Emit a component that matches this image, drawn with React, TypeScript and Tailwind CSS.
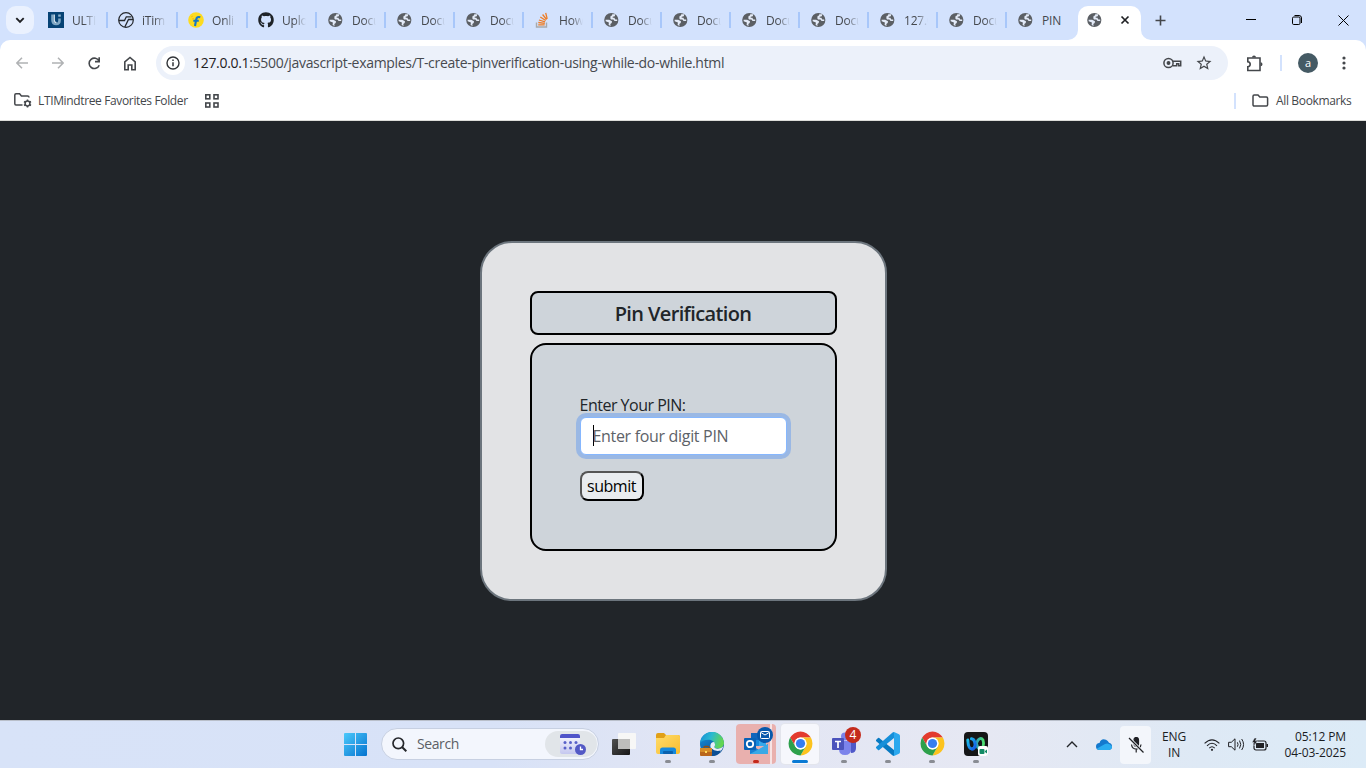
import React from "react";
import { MdStarBorder } from "react-icons/md";
import { FaGithub } from "react-icons/fa";

type IconProps = { className?: string };

const Globe = () => (
  <svg className="size-4 shrink-0" viewBox="0 0 16 16">
    <circle cx="7.300" cy="8" r="7.100" fill="#5b5f64" />
    <path
      d="M8.200 2.200H11.200L10.800 4.300 8.700 4.700V5.700H10.300L11.300 7.400H13.200V8.900H10.600L9.400 7.500H7L6.300 6.200 6.600 4 8 3.400Z"
      fill="#e4ebf8"
    />
    <path d="M1.600 7.700H5.200L8 9.300 7.700 11 6.300 12 6.600 13.900 4.600 13 4.900 10.600 1.700 9.300Z" fill="#e4ebf8" />
  </svg>
);

const UltiIcon = () => (
  <svg className="size-4 shrink-0" viewBox="0 0 16 16">
    <rect width="16" height="16" fill="#064375" />
    <path d="M4.500 2.500v5.500q0 4 3.800 4 3.200 0 3.200-3.200V6.500" fill="none" stroke="#7fa7c4" strokeWidth="2.600" />
    <path d="M6.300 2.500v5.500q0 2.500 2.200 2.500" fill="none" stroke="#d6e4ee" strokeWidth="1.200" />
    <rect x="10.200" y="2.500" width="2.600" height="2.200" fill="#8fb4cf" />
  </svg>
);

const ITimeIcon = () => (
  <svg className="size-4 shrink-0" viewBox="0 0 16 16" fill="none" stroke="#25282d" strokeWidth="1.200">
    <circle cx="8" cy="8" r="7.300" />
    <path d="M.8 8.500H6.500L8.300 4.800H13.500M15.200 7.500H10.500L6.800 15" strokeWidth="1.300" />
  </svg>
);

const FlipIcon = () => (
  <svg className="size-4 shrink-0" viewBox="0 0 16 16">
    <circle cx="8" cy="8" r="7.800" fill="#fddb1f" />
    <path d="M12.300 5.300Q8.900 4.200 8.200 7.500L7 14M5.300 8.700h5.500" fill="none" stroke="#1677c5" strokeWidth="2.100" />
    <path d="m3 5 2-1M4 7l2-.5" stroke="#f3bd16" />
  </svg>
);

const StackIcon = () => (
  <svg className="size-4 shrink-0" viewBox="0 0 16 16" fill="none">
    <path d="M1.500 10.500v4.500h10v-4.500" stroke="#a8a9ab" strokeWidth="1.400" />
    <path d="M3.200 12.800h6.500M3.300 10.500l6.500.8M3.900 8l6.200 1.900M5.300 5l5.400 3.500M7.600 2.500l4 5M10.700.8l1.500 6" stroke="#ee7c25" strokeWidth="1.300" />
  </svg>
);

const SECTOR = "M24 13H43.05A22 22 0 0 0 4.950 13L14.470 29.500A11 11 0 0 1 24 13Z";

const ChromeIcon = () => (
  <svg className="size-[25px]" viewBox="1 1 46 46">
    <path d={SECTOR} fill="#e33b2e" />
    <path d={SECTOR} fill="#fcc31e" transform="rotate(120 24 24)" />
    <path d={SECTOR} fill="#2da04b" transform="rotate(240 24 24)" />
    <circle cx="24" cy="24" r="11" fill="#fff" />
    <circle cx="24" cy="24" r="8.500" fill="#367df0" />
  </svg>
);

const tabs: { title: string; icon: React.ReactNode; wide?: boolean }[] = [
  { title: "ULTI", icon: <UltiIcon />, wide: true },
  { title: "iTim", icon: <ITimeIcon />, wide: true },
  { title: "Onli", icon: <FlipIcon />, wide: true },
  { title: "Uplo", icon: <FaGithub className="size-4 shrink-0 text-[#1f2328]" />, wide: true },
  { title: "Docu", icon: <Globe /> },
  { title: "Docu", icon: <Globe /> },
  { title: "Docu", icon: <Globe /> },
  { title: "How", icon: <StackIcon /> },
  { title: "Docu", icon: <Globe /> },
  { title: "Docu", icon: <Globe /> },
  { title: "Docu", icon: <Globe /> },
  { title: "Docu", icon: <Globe /> },
  { title: "127.0", icon: <Globe /> },
  { title: "Docu", icon: <Globe /> },
  { title: "PIN", icon: <Globe /> },
];

function TabStrip() {
  return (
    <div className="flex h-10 bg-[#d3e2fd]">
      <button className="ml-1.5 mr-1 mt-1.5 flex size-7 shrink-0 items-center justify-center rounded-[10px] bg-[#eaf1fe]">
        <svg className="size-3" viewBox="0 0 12 12" fill="none" stroke="#1f2023" strokeWidth="1.900">
          <path d="m2.300 4.200 3.700 3.700 3.700-3.700" />
        </svg>
      </button>
      {tabs.map((t, i) => (
        <div key={i} className={`flex h-10 shrink-0 items-center pl-2.5 ${t.wide ? "w-[70px]" : "w-[69px]"}`}>
          <div className="flex w-6 shrink-0 items-center">{t.icon}</div>
          <div
            className={`w-[30px] shrink-0 whitespace-nowrap pt-px text-xs leading-5 tracking-[-0.2px] text-[#45484d] ${
              t.title === "PIN" ? "" : "[mask-image:linear-gradient(to_right,black_12px,transparent_24px)]"
            }`}
          >
            {t.title}
          </div>
          {i < 14 && <div className={`ml-auto h-4 w-0.5 bg-[#a8c7fa] ${i < 3 ? "" : "mr-px"}`} />}
        </div>
      ))}
      <div className="relative ml-px mt-1.5 flex h-[34px] w-[63px] shrink-0 items-center rounded-t-[10px] bg-white pb-1.5 pl-[9px]">
        <svg className="absolute -left-2.5 bottom-0 size-2.5" viewBox="0 0 10 10"><path d="M10 0v10H0A10 10 0 0 0 10 0Z" fill="#fff" /></svg>
        <svg className="absolute -right-2.5 bottom-0 size-2.5" viewBox="0 0 10 10"><path d="M0 0v10h10A10 10 0 0 1 0 0Z" fill="#fff" /></svg>
        <Globe />
        <svg className="ml-[17px] size-2.5" viewBox="0 0 10 10" stroke="#1f2023" strokeWidth="1.700">
          <path d="m1.500 1.500 7 7m0-7-7 7" />
        </svg>
      </div>
      <svg className="ml-3.5 mt-[15px] size-[11px]" viewBox="0 0 11 11" stroke="#44474b" strokeWidth="1.600">
        <path d="M5.500.5v10M.5 5.500h10" />
      </svg>
      <div className="ml-auto mr-[17px] flex h-10 items-center gap-9 text-black">
        <svg className="size-2.5" viewBox="0 0 10 10" stroke="black"><path d="M0 4.500h10" /></svg>
        <svg className="size-2.5" viewBox="0 0 10 10" fill="none" stroke="black">
          <rect x=".5" y="2" width="7.500" height="7.500" rx="1.200" />
          <path d="M2.500.5H7A2.500 2.500 0 0 1 9.500 3v5" />
        </svg>
        <svg className="size-[11px]" viewBox="0 0 11 11" stroke="black"><path d="m.5.5 10 10m0-10-10 10" /></svg>
      </div>
    </div>
  );
}

const FolderIcon = ({ className }: IconProps) => (
  <svg className={className} viewBox="0 0 17 14" fill="none" stroke="#44474b" strokeWidth="1.500">
    <path d="M1 2.200Q1 1 2.200 1H6l1.800 2h6.600q1.200 0 1.200 1.200v6.600q0 1.200-1.200 1.200H2.200Q1 12 1 10.800Z" />
  </svg>
);

function Toolbar() {
  return (
    <div className="bg-[#d3e2fd]">
      <div className="flex h-[46px] items-center rounded-t-[10px] bg-white pl-4">
        <svg className="size-3" viewBox="0 0 12 12" fill="none" stroke="#b0b2b4" strokeWidth="1.500"><path d="M12 6H1m5-5.200L.9 6 6 11.200" /></svg>
        <svg className="ml-6 size-3" viewBox="0 0 12 12" fill="none" stroke="#b0b2b4" strokeWidth="1.500"><path d="M0 6h11M6 .8 11.100 6 6 11.200" /></svg>
        <svg className="ml-6 size-[13px]" viewBox="0 0 13 13" fill="none" stroke="#44474b" strokeWidth="1.600">
          <path d="M11.200 8.200A5.200 5.200 0 1 1 11.100 4.200M11.200.3v4.300H7" />
        </svg>
        <svg className="ml-[23px] h-[15px] w-3" viewBox="0 0 12 15" fill="none" stroke="#44474b" strokeWidth="1.600">
          <path d="M.8 13.700V5.800L6 1.500l5.200 4.300v7.900H7.800V9H4.200v4.700Z" />
        </svg>
        <div className="ml-5 flex h-[34px] w-[1072px] items-center rounded-full bg-[#ecf1fa] pl-[5px] pr-[15px]">
          <div className="flex size-6 items-center justify-center rounded-full bg-white">
            <svg className="size-3.5" viewBox="0 0 14 14" fill="none" stroke="#323539" strokeWidth="1.400">
              <circle cx="7" cy="7" r="6" /><path d="M7 6.200v4M7 3.500v1.500" strokeWidth="1.500" />
            </svg>
          </div>
          <div className="ml-2 whitespace-nowrap text-sm tracking-[-0.31px] text-[#474a4f]">
            <span className="text-[#1f2023]">127.0.0.1</span>:5500/javascript-examples/T-create-pinverification-using-while-do-while.html
          </div>
          <svg className="ml-auto h-3 w-[19px]" viewBox="0 0 19 12" fill="none" stroke="#44474b" strokeWidth="1.500">
            <circle cx="5.500" cy="6" r="4.600" /><circle cx="5.500" cy="6" r="1.200" fill="#44474b" />
            <path d="M9.700 4.200h8v4.600h-2v-2h-2v2h-4" />
          </svg>
          <MdStarBorder className="ml-[13px] size-[18px] text-[#44474b]" />
        </div>
        <svg className="ml-[18px] h-[17px] w-[18px]" viewBox="0 0 18 17" fill="none" stroke="#44474b" strokeWidth="1.600">
          <path d="M1.800 3H14v12.500H1.800v-3.700q2.400-.3 2.400-2.500T1.800 6.800Z" />
          <path d="M6 2.500a2 2 0 0 1 4 0ZM14.500 7.300a2 2 0 0 1 0 4Z" fill="#44474b" stroke="none" />
        </svg>
        <div className="ml-4 h-4 w-0.5 bg-[#d3e2fd]" />
        <div className="ml-4 flex size-5 items-center justify-center rounded-full bg-[#455a64] pb-px text-[11px] leading-none text-white">a</div>
        <svg className="ml-6 h-3.5 w-1" viewBox="0 0 4 14" fill="#44474b"><circle cx="2" cy="2" r="1.600" /><circle cx="2" cy="7" r="1.600" /><circle cx="2" cy="12" r="1.600" /></svg>
      </div>
      <div className="flex h-[35px] items-center border-b border-[#dcddd9] bg-white pb-[5px] pl-3.5 pr-3.5 text-xs text-[#44474b]">
        <svg className="h-[15px] w-[18px]" viewBox="0 0 18 15" fill="none" stroke="#44474b" strokeWidth="1.500">
          <path d="M8.500 12H2Q.8 12 .8 10.800V2Q.8.800 2 .8h3.600L7.400 3H13.500q1.500 0 1.500 1.500" />
          <circle cx="13.500" cy="10.500" r="2.400" /><path d="M13.500 6.500v1.600m0 4.800v1.600m-3.500-6 1.400.8m4.200 2.400 1.400.8m0-4-1.400.8m-4.200 2.400-1.400.8" />
        </svg>
        <span className="ml-1.5 w-[151px] whitespace-nowrap tracking-[-0.36px]">LTIMindtree Favorites Folder</span>
        <svg className="ml-4 size-3.5" viewBox="0 0 14 14" fill="none" stroke="#44474b" strokeWidth="1.600">
          <rect x=".8" y=".8" width="4" height="4" /><rect x="9" y=".8" width="4" height="4" /><rect x=".8" y="9" width="4" height="4" /><rect x="9" y="9" width="4" height="4" />
        </svg>
        <div className="ml-auto h-4 w-0.5 bg-[#d3e2fd]" />
        <FolderIcon className="ml-4 h-3.5 w-[17px]" />
        <span className="ml-[7px] w-[76px] whitespace-nowrap tracking-[-0.35px]">All Bookmarks</span>
      </div>
    </div>
  );
}

function PinPage() {
  return (
    <main className="flex h-[599px] items-center justify-center bg-[#212529]">
      <div className="flex h-[360px] w-[407px] flex-col gap-2 rounded-[32px] border-2 border-[#6c757d] bg-[#e2e3e5] p-12 text-[#212529]">
        <h1 className="flex h-11 shrink-0 items-center justify-center rounded-lg border-2 border-black bg-[#ced4da] pt-0.5 text-xl font-semibold tracking-[-0.63px]">Pin Verification</h1>
        <form className="flex h-[208px] flex-col items-start rounded-2xl border-2 border-black bg-[#ced4da] p-12 text-base" onSubmit={(e) => e.preventDefault()}>
          <label className="h-6 whitespace-nowrap tracking-[-0.5px]">Enter Your PIN:</label>
          <div className="flex h-[38px] w-[207px] shrink-0 items-center rounded-md border border-[#86b7fe] bg-white pl-3 text-[#5d6268] shadow-[0_0_0_4px_#9ab8e4]">
            <div className="-mr-px h-[21px] w-px bg-black" />
            <span className="whitespace-nowrap tracking-[-0.32px]">Enter four digit PIN</span>
          </div>
          <button className="mt-4 h-[30px] w-16 shrink-0 rounded-lg border-2 border-b-black border-l-[#555] border-r-black border-t-[#555] bg-[#e9ecef] leading-none tracking-[-0.45px] text-black">submit</button>
        </form>
      </div>
    </main>
  );
}

function AppCell({ children, running, className = "" }: { children: React.ReactNode; running?: "gray" | "red" | "blue"; className?: string }) {
  return (
    <div className="flex h-[47px] w-11 flex-col items-center pt-[3px]">
      <div className={`relative flex h-10 w-[38px] flex-col items-center rounded ${className}`}>
        <div className="flex h-9 items-center pt-[3px]">{children}</div>
        {running === "gray" && <div className="h-[3px] w-1.5 rounded-full bg-[#898c93]" />}
        {running === "red" && <div className="h-[3px] w-1.5 rounded-full bg-[#c4291c]" />}
        {running === "blue" && <div className="h-[3px] w-4 rounded-full bg-[#0a7ad4]" />}
      </div>
    </div>
  );
}

const TaskViewIcon = () => (
  <svg className="size-6" viewBox="0 0 24 24">
    <defs><linearGradient id="tv" x2="1" y2="1"><stop stopColor="#505050" /><stop offset="1" stopColor="#171717" /></linearGradient></defs>
    <rect y="7" width="18" height="16" rx="1" fill="url(#tv)" /><rect x="6" y="1" width="18" height="16" rx="1" fill="#f7f7f6" />
    <rect x="6" y="7" width="12" height="10" fill="#bdbdbc" />
  </svg>
);

const FilesIcon = () => (
  <svg className="size-6" viewBox="0 0 24 24">
    <defs><linearGradient id="fy" x2="1" y2="1"><stop stopColor="#ffdc6a" /><stop offset="1" stopColor="#f8bc2f" /></linearGradient></defs>
    <path d="M0 3q0-2 2-2h6l2 2h12q2 0 2 2v10H0Z" fill="#e1a018" />
    <path d="M0 6h8l2-3h12q2 0 2 2v15q0 2-2 2H2q-2 0-2-2Z" fill="url(#fy)" />
    <path d="M4 22v-4q0-2.500 2.500-2.500h11Q20 15.500 20 18v4Z" fill="#1689dc" /><rect x="7" y="19" width="10" height="3" rx="1" fill="#0a61ae" />
  </svg>
);

const EdgeIcon = () => (
  <svg className="size-6" viewBox="0 0 24 24">
    <defs>
      <linearGradient id="eg" x2="1" y2=".3"><stop stopColor="#148ad6" /><stop offset=".5" stopColor="#2bb9d0" /><stop offset="1" stopColor="#62d552" /></linearGradient>
      <linearGradient id="eb" x2=".6" y2="1"><stop stopColor="#1795e0" /><stop offset="1" stopColor="#0b4f96" /></linearGradient>
    </defs>
    <circle cx="12" cy="12" r="12" fill="url(#eb)" />
    <path d="M.1 10.500A12 12 0 0 1 24 11c0 3.500-2.800 5.500-6.200 5.500-2.800 0-4-1-3.300-2.300C16 10.500 12 7.600 8 7.800 4.500 8 2 9 .1 10.500Z" fill="url(#eg)" />
    <path d="M14.500 10.500q1 2-.1 4-.5 1.500 1.600 2 4.500 1 7.400-2.200Q22.500 17.500 20.500 19.500 13.500 20.500 10.800 16 9.500 12.500 12 10.500 13.500 9.500 14.500 10.500Z" fill="#e8edf7" />
    <path d="M11.500 16.500q3.500 3.500 9.500 2-3.500 5.500-9.500 5.500Z" fill="#0c4f94" />
    <path d="M4 16.500v-1q0-1 1-1h3q1 0 1 1v1" fill="none" stroke="#8e4e17" strokeWidth="1.300" />
    <rect y="16" width="12" height="8" rx="1" fill="#b9661b" /><rect y="16" width="12" height="4" rx="1" fill="#d68c27" /><rect x="5" y="19" width="2" height="2" fill="#ffd95b" />
  </svg>
);

const OutlookIcon = () => (
  <svg className="size-6" viewBox="0 0 24 24">
    <rect x="7" y="1" width="15" height="13" fill="#1689dc" /><path d="M7 1h8v7H7Z" fill="#1265bb" /><path d="M15 8h7v6h-7Z" fill="#35a8ea" />
    <path d="m6 12 9 6 9-6v10H6Z" fill="#1a80d2" /><path d="m24 12-18 10h18Z" fill="#3aa9e6" />
    <rect y="6" width="12" height="12" rx="1" fill="#0962b6" /><circle cx="6" cy="12" r="3.200" fill="none" stroke="white" strokeWidth="1.800" />
  </svg>
);

const TeamsIcon = () => (
  <svg className="size-6" viewBox="0 0 24 24">
    <circle cx="20" cy="6.500" r="3" fill="#5059c9" /><circle cx="13" cy="4.500" r="4" fill="#7b83eb" />
    <path d="M16 9h8v7q0 5-5 5Z" fill="#5059c9" /><path d="M7 9h12v8q0 6-6 6t-6-6Z" fill="#7b83eb" />
    <rect y="6" width="12" height="12" rx="1" fill="#4b53bc" /><path d="M3 9.500h6M6 9.500V16" stroke="white" strokeWidth="1.700" />
  </svg>
);

const CodeIcon = () => (
  <svg className="size-6" viewBox="0 0 24 24">
    <path d="m0 8 2-2q.5-.5 1.200 0L18 18v6q-1 0-2-1L0 9Z" fill="#0879c1" />
    <path d="m0 16 2 2q.5.500 1.200 0L18 6V0q-1 0-2 1L0 15Z" fill="#168fd9" />
    <path d="M17 0q.5-.200 1 0l5 2.300q1 .5 1 1.700v16q0 1.200-1 1.700L18 24q-.5.200-1 0 1 0 1-1V1q0-1-1-1Z" fill="#2ba8ee" />
  </svg>
);

const WebexIcon = () => (
  <svg className="size-6" viewBox="0 0 24 24">
    <defs>
      <linearGradient id="wa" x2="1" y2="1"><stop stopColor="#1cc3ea" /><stop offset="1" stopColor="#1557e6" /></linearGradient>
      <linearGradient id="wc" x2="1"><stop stopColor="#1673ea" /><stop offset="1" stopColor="#4fe070" /></linearGradient>
    </defs>
    <rect width="24" height="24" rx="4" fill="#151617" />
    <path d="M8 17C11 17 12 12.500 13 10 14 7 17 5 19 8q1 3 .2 6-1 3-3 3-2.500 0-3.200-4" fill="none" stroke="url(#wc)" strokeWidth="2.800" strokeLinecap="round" />
    <path d="M3.800 8C4 12.500 5 17 8 17c2.600 0 3.600-3.500 2.800-6.500Q10 7 7.500 6.800" fill="none" stroke="url(#wa)" strokeWidth="3" strokeLinecap="round" />
    <rect x="14" y="14" width="10" height="10" rx="2" fill="white" /><rect x="15.500" y="17" width="5" height="5" rx="1" fill="#138b65" /><path d="m21 19 2-1.500v4L21 20Z" fill="#138b65" />
  </svg>
);

function Taskbar() {
  return (
    <footer className="flex h-12 border-t border-[#b9bfca] bg-[linear-gradient(90deg,#d8e3f8_0%,#d8e2f7_36%,#e1e5f4_50%,#e6e8f3_72%,#dee9f5_88%,#dcebf7_100%)] pl-[344px]">
      <svg className="mt-3 size-[23px]" viewBox="0 0 23 23">
        <defs><linearGradient id="win" x2="1" y2="1"><stop stopColor="#4cc9fb" /><stop offset="1" stopColor="#0573cf" /></linearGradient></defs>
        <path d="M0 1q0-1 1-1h10v11H0ZM12 0h10q1 0 1 1v10H12ZM0 12h11v11H1q-1 0-1-1ZM12 12h11v10q0 1-1 1H12Z" fill="url(#win)" />
      </svg>
      <div className="ml-3.5 mt-[7px] flex h-8 w-[218px] items-center rounded-full border border-[#c7d0e2] bg-[#f3f6fd] pl-2.5 pr-px">
        <svg className="size-[15px]" viewBox="0 0 15 15" fill="none" stroke="#25272b" strokeWidth="1.700"><circle cx="6.300" cy="6.300" r="5.300" /><path d="m10 10 4.300 4.300" strokeWidth="2" /></svg>
        <span className="ml-2.5 text-sm tracking-[-0.4px] text-[#5c5f65]">Search</span>
        <div className="ml-auto flex h-[26px] w-[52px] items-center justify-center rounded-full bg-[#e1e5e9] pl-1">
          <svg className="h-[22px] w-7" viewBox="0 0 28 22">
            <defs><linearGradient id="cal" x2="0" y2="1"><stop stopColor="#fafaff" /><stop offset="1" stopColor="#c5c8ef" /></linearGradient></defs>
            <rect x="1" y="1" width="20" height="20" rx="2" fill="url(#cal)" /><path d="M1 5V3q0-2 2-2h16q2 0 2 2v2Z" fill="#5054c9" />
            <g fill="#5961c9"><circle cx="6" cy="9.500" r="1.500" /><circle cx="11.500" cy="9.500" r="1.500" /><circle cx="17" cy="9.500" r="1.500" /><circle cx="6" cy="15" r="1.500" /><circle cx="11.500" cy="15" r="1.500" /></g>
            <circle cx="21.500" cy="16.500" r="5.500" fill="#5359c5" /><path d="M21.500 13.500v3h2.500" stroke="white" fill="none" strokeWidth="1.300" />
          </svg>
        </div>
      </div>
      <div className="ml-[3px] flex">
        <AppCell><TaskViewIcon /></AppCell>
        <AppCell running="gray"><FilesIcon /></AppCell>
        <AppCell running="gray"><EdgeIcon /></AppCell>
        <AppCell running="red" className="min-w-10 bg-[linear-gradient(90deg,#e9b0ae_34px,#f7e3e4_34px,#f7e3e4_36px,#e9b0ae_36px)]">
          <OutlookIcon />
          <div className="absolute left-[21px] top-[3px] flex size-4 items-center justify-center rounded-full bg-[#0758ab]">
            <svg className="h-2 w-2.5" viewBox="0 0 10 8" fill="none" stroke="white"><rect x=".5" y=".5" width="9" height="7" rx="1" /><path d="m1 1.500 4 2.500 4-2.500" /></svg>
          </div>
        </AppCell>
        <AppCell running="blue" className="bg-[#f6f7fc] shadow-[0_0_0_1px_#e3e5ec]"><ChromeIcon /></AppCell>
        <AppCell running="gray">
          <TeamsIcon />
          <div className="absolute left-5 top-[3px] flex size-4 items-center justify-center rounded-full bg-[#c42b1c] text-xs leading-none text-white">4</div>
        </AppCell>
        <AppCell running="gray"><CodeIcon /></AppCell>
        <AppCell running="gray"><ChromeIcon /></AppCell>
        <AppCell running="gray"><WebexIcon /></AppCell>
      </div>
      <div className="ml-auto flex h-[47px] items-center pr-5 text-[#1b1c1f]">
        <svg className="mr-[18px] h-[7px] w-3" viewBox="0 0 12 7" fill="none" stroke="#222529" strokeWidth="1.400"><path d="m1 6 5-5 5 5" /></svg>
        <svg className="mr-2 h-[11px] w-4" viewBox="0 0 16 11"><path d="M0 7.500Q0 4 3.500 4 5-1 10 .7q2 .8 3 3 3 .6 3 3.800 0 3-3 3.500H3.500Q0 11 0 7.500Z" fill="#1479ce" /><path d="M1 9.500 9 5q4-1.500 7 2.500 0 3-3 3.500H3.500Q2 11 1 9.500Z" fill="#2bacf0" /></svg>
        <div className="flex h-[38px] w-[31px] items-center justify-center rounded bg-[#f3f6fb]">
          <svg className="size-4" viewBox="0 0 16 16" fill="none" stroke="#202125" strokeWidth="1.200">
            <rect x="6" y=".5" width="4.500" height="9" rx="2.200" fill="#202125" /><path d="M3.500 7.500q.5 4.500 4.700 4.500T13 7.500M8.200 12v3.500" /><path d="m1 1 14 14" stroke="#f3f6fb" strokeWidth="3" /><path d="m1 1 14.500 14.500" />
          </svg>
        </div>
        <div className="ml-1 w-[38px] text-center text-xs leading-4 tracking-[-0.1px]">ENG<br />IN</div>
        <svg className="ml-[11px] h-3 w-4" viewBox="0 0 16 12" fill="none" stroke="#202125" strokeWidth="1.100"><path d="M.6 4.400Q8-2.800 15.400 4.400M3 6.800q5-5 10 0M5.300 9.100q2.700-2.700 5.400 0" /><circle cx="8" cy="10.800" r="1.100" fill="#202125" stroke="none" /></svg>
        <svg className="ml-2 h-[13px] w-[17px]" viewBox="0 0 17 13" fill="none" stroke="#202125"><path d="M.6 4.300h2.700L7 .8v11.400L3.300 8.700H.6ZM9.400 4.300q1.300 2.200 0 4.400M11.500 2.600q2.500 3.900 0 7.800M13.700 1q3.700 5.500 0 11" /></svg>
        <svg className="ml-[7px] h-[13px] w-[17px]" viewBox="0 0 17 13"><rect x="2" y="3" width="12" height="9" rx="2" fill="none" stroke="#202125" strokeWidth="1.200" /><rect x="4" y="5" width="8" height="5" fill="#202125" /><path d="M14.500 6h1.500v3h-1.500Z" fill="#202125" /><path d="M2.500 0 0 4.500h2V8l3.500-5h-2L4.500 0Z" fill="#202125" stroke="#dfeaf6" strokeWidth=".5" /></svg>
        <div className="ml-[15px] w-[62px] whitespace-nowrap text-right text-xs leading-4 tracking-[-0.1px]">05:12 PM<br />04-03-2025</div>
      </div>
    </footer>
  );
}

export default function App() {
  return (
    <div className="h-[768px] w-[1366px] overflow-hidden font-['Open_Sans','Noto_Sans',sans-serif]">
      <TabStrip />
      <Toolbar />
      <PinPage />
      <Taskbar />
    </div>
  );
}
